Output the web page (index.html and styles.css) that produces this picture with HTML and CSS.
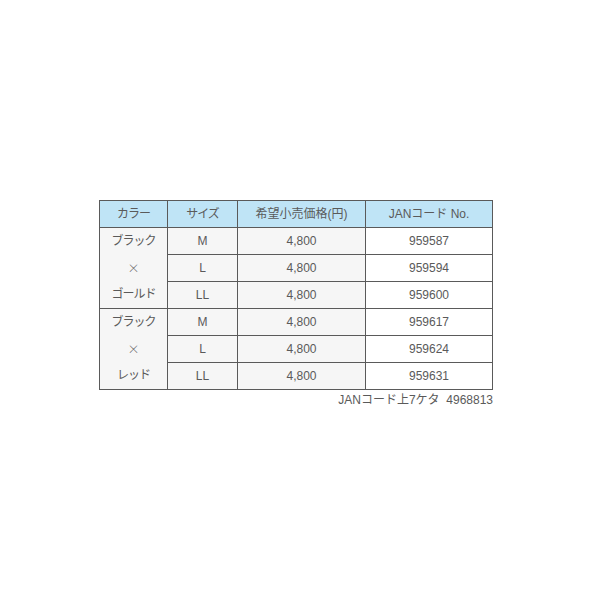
FILE: index.html
```html
<!DOCTYPE html>
<html lang="ja">
<head>
<meta charset="utf-8">
<link rel="stylesheet" href="styles.css">
</head>
<body>
<div class="wrap">
  <table class="spec">
    <thead>
      <tr>
        <th class="c1">カラー</th>
        <th class="c2">サイズ</th>
        <th class="c3">希望小売価格(円)</th>
        <th class="c4">JANコード No.</th>
      </tr>
    </thead>
    <tbody>
      <tr>
        <td class="color" rowspan="3"><div>ブラック</div><div class="times">×</div><div>ゴールド</div></td>
        <td class="grey">M</td><td class="grey">4,800</td><td>959587</td>
      </tr>
      <tr><td class="grey">L</td><td class="grey">4,800</td><td>959594</td></tr>
      <tr><td class="grey">LL</td><td class="grey">4,800</td><td>959600</td></tr>
      <tr>
        <td class="color" rowspan="3"><div>ブラック</div><div class="times">×</div><div>レッド</div></td>
        <td class="grey">M</td><td class="grey">4,800</td><td>959617</td>
      </tr>
      <tr><td class="grey">L</td><td class="grey">4,800</td><td>959624</td></tr>
      <tr><td class="grey">LL</td><td class="grey">4,800</td><td>959631</td></tr>
    </tbody>
  </table>
  <p class="note">JANコード上7ケタ&nbsp;&nbsp;4968813</p>
</div>
</body>
</html>
```

FILE: styles.css
```css
html, body {
  margin: 0;
  padding: 0;
  background: #ffffff;
}
body {
  font-family: "Liberation Sans", "Noto Sans CJK JP", sans-serif;
  font-size: 12px;
  color: #5a5a5a;
}
.wrap {
  padding: 200px 0 0 99px;
  width: 394px;
}
.spec {
  border-collapse: collapse;
  width: 394px;
  table-layout: fixed;
}
.spec th,
.spec td {
  border: 1px solid #5a5a5a;
  padding: 0;
  height: 26px;
  line-height: 26px;
  text-align: center;
  font-weight: normal;
  vertical-align: middle;
}
.spec th {
  background: #bfe4f6;
}
.c1 { width: 67px; }
.c2 { width: 69px; }
.c3 { width: 127px; }
.c4 { width: 126px; }
.spec td {
  background: #ffffff;
}
.spec td.grey,
.spec td.color {
  background: #f6f6f6;
}
.color div {
  line-height: 26.6px;
  letter-spacing: -1px;
}
.color div.times {
  font-family: "Noto Sans CJK JP", sans-serif;
  font-weight: 300;
  letter-spacing: 0;
}
.spec th.c1, .spec th.c2 {
  letter-spacing: -1px;
}
.note {
  margin: 0;
  text-align: right;
  line-height: 21px;
}
```
